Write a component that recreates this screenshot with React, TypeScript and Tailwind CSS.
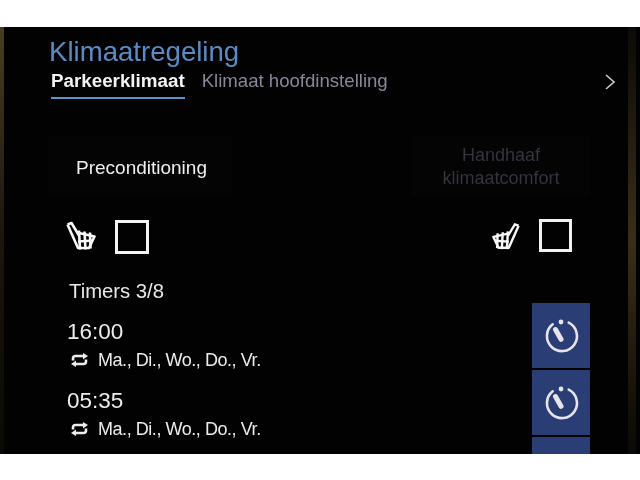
const font = { fontFamily: '"Liberation Sans", Arial, sans-serif' };

const days = "Ma., Di., Wo., Do., Vr.";

const SeatIcon = ({ flip = false }: { flip?: boolean }) => (
  <svg
    viewBox="0 0 30 28"
    className={flip ? "h-[28px] w-[28px] -scale-x-100" : "mb-[3px] h-[29px] w-[30px]"}
    fill="none"
    stroke="#f8f8f8"
    strokeWidth="2.6"
    strokeLinejoin="round"
  >
    <path d="M1.5 3 L5.5 1.5 L13 14 M1.5 3 L12 26.5 L23 26.5 L28.5 15 L13 11.5" />
    <path d="M13 9 L14 28 M18.5 10 L19.5 28 M24 11 L24.5 27" />
    <path d="M12 20 L27 19" />
  </svg>
);

const RepeatIcon = () => (
  <svg viewBox="0 0 17 14" className="h-[14px] w-[17px] shrink-0" fill="#eeeeee">
    <path d="M2 7.5 V5.5 Q2 3 4.5 3 H13" fill="none" stroke="#eeeeee" strokeWidth="2.6" />
    <path d="M12 0 L17 3 L12 6.5 Z" />
    <path d="M15 6.5 V8.5 Q15 11 12.5 11 H4" fill="none" stroke="#eeeeee" strokeWidth="2.6" />
    <path d="M5 7.5 L0 11 L5 14 Z" />
  </svg>
);

const TimerIcon = () => (
  <svg viewBox="0 0 40 40" className="h-[40px] w-[40px]" fill="none" stroke="#e4e4ea" strokeLinecap="round">
    <path d="M27.7 6.7 A15 15 0 1 1 11.7 8.3" strokeWidth="2.6" />
    <path d="M20 23.3 L14.5 13.5" strokeWidth="5" />
    <circle cx="20" cy="6" r="2.4" fill="#e4e4ea" stroke="none" />
  </svg>
);

const TimerRow = ({ time, top = "pt-[18px]" }: { time?: string; top?: string }) => (
  <div className="flex h-[65px] shrink-0 justify-between">
    {time ? (
      <div className={`pl-[19px] text-[#ececec] ${top}`}>
        <div className="text-[22.5px] leading-[22px]">{time}</div>
        <div className="ml-[4px] mt-[10px] flex items-center gap-[10px] text-[18px] leading-[14px] tracking-[-0.45px]">
          <RepeatIcon />
          <span>{days}</span>
        </div>
      </div>
    ) : (
      <div />
    )}
    <div className="flex w-[58px] items-center justify-center bg-[#2a3d74]">
      {time && <TimerIcon />}
    </div>
  </div>
);

export default function App() {
  return (
    <div className="flex h-[480px] w-[640px] flex-col bg-white" style={font}>
      <div className="h-[27px] shrink-0 bg-white" />
      <div className="flex h-[427px] overflow-hidden bg-[#020203]">
        <div className="w-[4px] shrink-0 bg-gradient-to-b from-[#4a3d22] via-[#1a160c] to-[#0a0906]" />
        <main className="flex-1 pl-[44px] pr-[38px] blur-[0.4px]">
          <h1 className="ml-px pt-[10px] text-[27.6px] leading-[30px] text-[#5a8cc4]">Klimaatregeling</h1>
          <div className="mr-[-25px] mt-[3px] flex items-start justify-between">
            <div className="flex items-start">
              <div className="ml-[3px] border-b-2 border-[#5f93cc] pb-[5px] text-[18.8px] font-bold leading-[22px] text-[#f2f2f2]">
                Parkeerklimaat
              </div>
              <div className="ml-[17px] text-[18.6px] leading-[22px] text-[#8a8898]">Klimaat hoofdinstelling</div>
            </div>
            <svg viewBox="0 0 10 16" className="mt-[4px] h-[16px] w-[10px]" fill="none" stroke="#c9c9d2" strokeWidth="1.6">
              <path d="M1 1 L9 8 L1 15" />
            </svg>
          </div>

          <div className="mt-[38px] flex h-[60px] justify-between">
            <div className="flex w-[184px] items-center bg-[#040405] pl-[28px] pt-[2px] text-[19px] text-[#efefef]">
              Preconditioning
            </div>
            <div className="flex w-[178px] items-center justify-center bg-[#040405] text-center text-[18px] leading-[23px] text-[#34343e]">
              Handhaaf
              <br />
              klimaatcomfort
            </div>
          </div>

          <div className="mt-[23px] flex items-start justify-between pl-[18px] pr-[18px]">
            <div className="flex items-center gap-[19px]">
              <SeatIcon />
              <div className="h-[34px] w-[34px] border-[3px] border-[#f4f4f4]" />
            </div>
            <div className="-mt-px flex items-center gap-[19px]">
              <SeatIcon flip />
              <div className="h-[33px] w-[33px] border-[3px] border-[#eef2f2]" />
            </div>
          </div>

          <div className="mt-[26px] pl-[21px] text-[20.3px] leading-[22px] text-[#e8e8e8]">Timers 3/8</div>
          <div className="mt-px flex flex-col gap-[2px]">
            <TimerRow time="16:00" />
            <TimerRow time="05:35" top="pt-[20px]" />
            <TimerRow />
          </div>
        </main>
        <div className="mr-[4px] w-[8px] shrink-0 bg-gradient-to-b from-[#0c0b08] via-[#3a2f18] to-[#0a0906]" />
      </div>
      <div className="h-[26px] shrink-0 bg-white" />
    </div>
  );
}
